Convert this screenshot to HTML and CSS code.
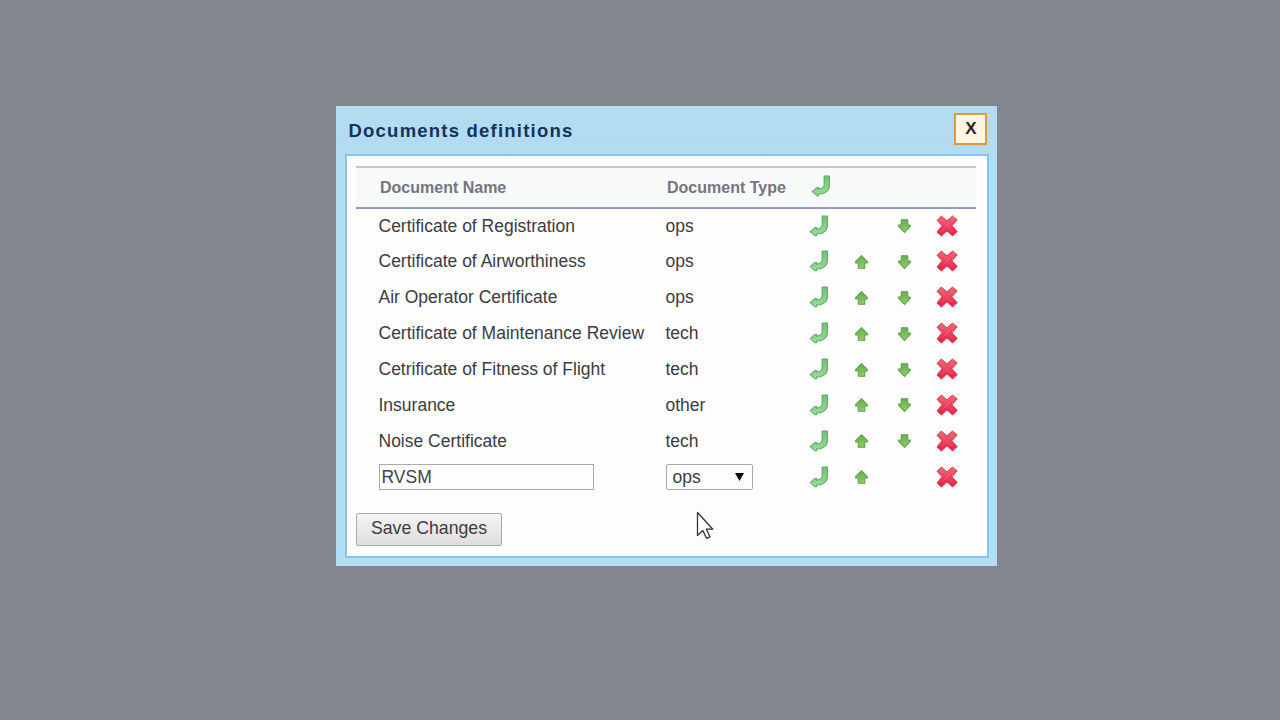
FILE: index.html
```html
<!DOCTYPE html>
<html lang="en">
<head>
<meta charset="utf-8">
<title>Documents definitions</title>
<link rel="stylesheet" href="styles.css">
</head>
<body>
<svg class="sprites" aria-hidden="true">
  <defs>
    <linearGradient id="greenFill" x1="0" y1="0" x2="0" y2="1"><stop offset="0" stop-color="#72c374"/><stop offset="1" stop-color="#a0db98"/></linearGradient>
    <linearGradient id="upFill" x1="0" y1="0" x2="0" y2="1"><stop offset="0" stop-color="#67ae51"/><stop offset="1" stop-color="#94cb64"/></linearGradient>
    <linearGradient id="redFill" x1="0" y1="0" x2="0" y2="1"><stop offset="0" stop-color="#f3687a"/><stop offset="1" stop-color="#e61d42"/></linearGradient>
    <symbol id="enter" viewBox="0 0 20 22"><path d="M13.2 1.2H18.4V10.2C18.4 15.6 14.4 19 7.6 19V20.6H6L1.2 16.6L6 12.6H7.6V14.1C11.2 14.1 13.2 12.8 13.2 9.6Z" fill="url(#greenFill)" stroke="#5bb065" stroke-width="1.2" stroke-linejoin="round"/></symbol>
    <symbol id="up" viewBox="0 0 16 16"><path d="M8 1.3L14.2 7.7V9H11.4V14.6H4.6V9H1.8V7.7Z" fill="url(#upFill)" stroke="#5ca54a" stroke-width="1.2" stroke-linejoin="round"/></symbol>
    <symbol id="down" viewBox="0 0 16 16"><path d="M4.6 1.4H11.4V7H14.2V8.3L8 14.7L1.8 8.3V7H4.6Z" fill="url(#upFill)" stroke="#5ca54a" stroke-width="1.2" stroke-linejoin="round"/></symbol>
    <symbol id="cross" viewBox="0 0 22 22"><path d="M5.2 1L11 5.9L16.5 1L18.4 2.8L21.2 4.9L15.9 10.8L21.2 16.6L18.8 18.8L16.6 21L11 15.9L5.4 21L3.2 19L1 17L6.1 10.8L1 5.3L3.5 3.1Z" fill="url(#redFill)" stroke="#d83a53" stroke-width="1" stroke-linejoin="round"/><path d="M5.3 4.8L16.8 17M16.8 4.8L5.3 17" fill="none" stroke="#f56b81" stroke-width="1" opacity=".5"/></symbol>
  </defs>
</svg>
<main class="dialog">
  <header class="titlebar">
    <h1 class="title">Documents definitions</h1>
    <button class="close">X</button>
  </header>
  <section class="panel">
    <div class="row head"><span>Document Name</span><span>Document Type</span><svg class="enter"><use href="#enter"/></svg></div>
    <div class="row"><span>Certificate of Registration</span><span>ops</span><svg class="enter"><use href="#enter"/></svg><i></i><svg class="arrow"><use href="#down"/></svg><svg class="cross"><use href="#cross"/></svg></div>
    <div class="row"><span>Certificate of Airworthiness</span><span>ops</span><svg class="enter"><use href="#enter"/></svg><svg class="arrow"><use href="#up"/></svg><svg class="arrow"><use href="#down"/></svg><svg class="cross"><use href="#cross"/></svg></div>
    <div class="row"><span>Air Operator Certificate</span><span>ops</span><svg class="enter"><use href="#enter"/></svg><svg class="arrow"><use href="#up"/></svg><svg class="arrow"><use href="#down"/></svg><svg class="cross"><use href="#cross"/></svg></div>
    <div class="row"><span>Certificate of Maintenance Review</span><span>tech</span><svg class="enter"><use href="#enter"/></svg><svg class="arrow"><use href="#up"/></svg><svg class="arrow"><use href="#down"/></svg><svg class="cross"><use href="#cross"/></svg></div>
    <div class="row"><span>Cetrificate of Fitness of Flight</span><span>tech</span><svg class="enter"><use href="#enter"/></svg><svg class="arrow"><use href="#up"/></svg><svg class="arrow"><use href="#down"/></svg><svg class="cross"><use href="#cross"/></svg></div>
    <div class="row"><span>Insurance</span><span>other</span><svg class="enter"><use href="#enter"/></svg><svg class="arrow"><use href="#up"/></svg><svg class="arrow"><use href="#down"/></svg><svg class="cross"><use href="#cross"/></svg></div>
    <div class="row"><span>Noise Certificate</span><span>tech</span><svg class="enter"><use href="#enter"/></svg><svg class="arrow"><use href="#up"/></svg><svg class="arrow"><use href="#down"/></svg><svg class="cross"><use href="#cross"/></svg></div>
    <div class="row"><input class="field" value="RVSM" aria-label="Document name"><div class="select"><span>ops</span><svg class="caret" viewBox="0 0 10 10"><path d="M0 .5H10L5 9.5Z"/></svg></div><svg class="enter"><use href="#enter"/></svg><svg class="arrow"><use href="#up"/></svg><i></i><svg class="cross"><use href="#cross"/></svg></div>
    <button class="save">Save Changes</button>
  </section>
</main>
<svg class="cursor" viewBox="0 0 18 29"><path d="M1.5 1.5V24.5L6.8 19.6L10.6 27.3L14 25.8L10.4 18.2H16.8Z" fill="#fff" stroke="#333338" stroke-width="1.3" stroke-linejoin="round"/></svg>
</body>
</html>
```
FILE: styles.css
```css
* { box-sizing: border-box; }
body {
  margin: 0;
  height: 720px;
  padding: 106px 0 0 335.5px;
  overflow: hidden;
  background: #83868f;
  font-family: "Liberation Sans", Arial, sans-serif;
  color: #3c3c3e;
}
.sprites { position: absolute; width: 0; height: 0; }
.dialog {
  width: 661px;
  height: 460px;
  padding: 0 8px 0 9px;
  background: linear-gradient(#b0deee, #b3daf2 35px, #b1def2 60px);
}
.titlebar {
  height: 48px;
  padding: 6.5px 1.5px 0 4px;
  display: flex;
  justify-content: space-between;
  align-items: flex-start;
}
.title {
  margin: 5px 0 0;
  font-size: 18.5px;
  line-height: 25px;
  letter-spacing: 1.22px;
  color: #12345b;
}
.close {
  width: 33px;
  height: 32px;
  padding: 0 0 0 1px;
  border: 2px solid #d99b41;
  background: #fef4e2;
  color: #29261f;
  font: bold 17px "Liberation Sans", Arial, sans-serif;
}
.panel {
  height: 404px;
  padding: 10px 11px 0 9.5px;
  border: 2px solid #85c3ea;
  background: #fdfdfe;
}
.row {
  height: 35.86px;
  padding-left: 22.5px;
  display: grid;
  grid-template-columns: 287px 132.5px repeat(4, 42.5px);
  align-items: center;
  font-size: 17.5px;
  white-space: nowrap;
}
.row:not(.head) { padding-bottom: 1.6px; }
.row > svg { justify-self: center; }
.head {
  height: 43px;
  padding-left: 24px;
  border-top: 2px solid #c3c8c9;
  border-bottom: 2px solid #8d9cc1;
  background: #f8f9f9;
  color: #75747f;
  font-size: 16px;
  font-weight: bold;
}
.enter { width: 20px; height: 22px; margin-top: -1px; }
.head .enter { margin-top: -3px; }
.arrow { width: 15px; height: 16px; }
.cross { width: 22px; height: 22px; margin-top: -1px; }
.field {
  width: 215px;
  height: 26px;
  padding: 0 0 0 2px;
  border: 1.5px solid #aaa;
  background: #fdfdfd;
  color: #444;
  font: 17.5px "Liberation Sans", Arial, sans-serif;
}
.select {
  width: 87px;
  height: 26px;
  padding: 0 8px 0 6px;
  display: flex;
  align-items: center;
  justify-content: space-between;
  border: 1.5px solid #aaa;
  border-radius: 2px;
  background: #fdfdfd;
}
.caret { width: 9px; height: 10px; fill: #0a0a0a; }
.save {
  width: 146px;
  height: 33px;
  margin-top: 17px;
  padding: 0 0 2px;
  border: 1.5px solid #aaa;
  border-radius: 2px;
  background: linear-gradient(#f4f4f4, #dedede);
  color: #3c3c3e;
  font: 17.7px "Liberation Sans", Arial, sans-serif;
}
.cursor { position: absolute; left: 696px; top: 511px; width: 18px; height: 29px; }
```
